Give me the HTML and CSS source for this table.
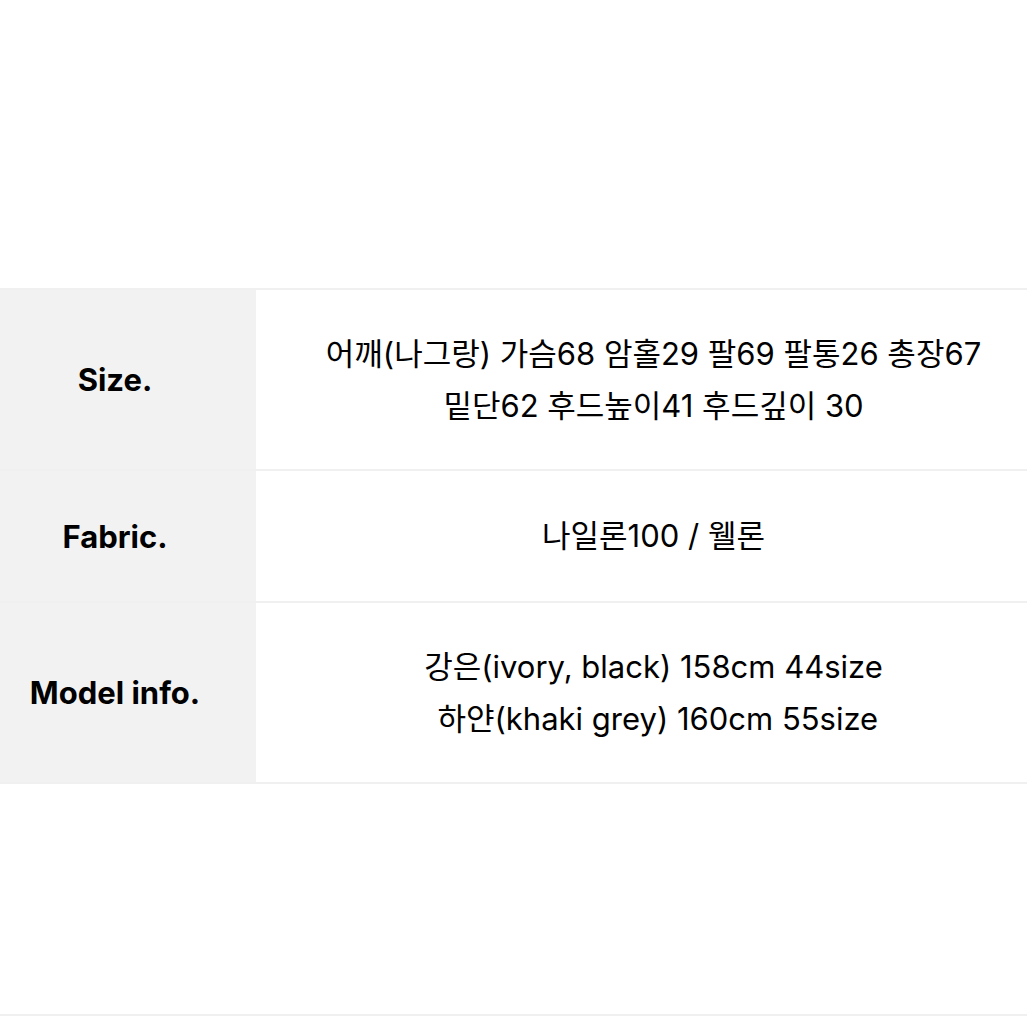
FILE: index.html
```html
<!DOCTYPE html>
<html lang="ko">
<head>
<meta charset="utf-8">
<link rel="stylesheet" href="styles.css">
</head>
<body>
<div class="page">
  <div class="table">
    <div class="row row-tall">
      <div class="label">Size.</div>
      <div class="value">어깨(나그랑) 가슴68 암홀29 팔69 팔통26 총장67<br>밑단62 후드높이41 후드깊이 30</div>
    </div>
    <div class="row row-short">
      <div class="label">Fabric.</div>
      <div class="value">나일론100 / 웰론</div>
    </div>
    <div class="row row-tall">
      <div class="label">Model info.</div>
      <div class="value">강은(ivory, black) 158cm 44size<br>&nbsp;하얀(khaki grey) 160cm 55size</div>
    </div>
  </div>
  <div class="bottom-line"></div>
</div>
</body>
</html>
```

FILE: styles.css
```css
html, body {
  margin: 0;
  padding: 0;
  background: #ffffff;
}
.page {
  width: 1027px;
  height: 1027px;
  display: flex;
  flex-direction: column;
  font-family: Inter, "Noto Sans CJK KR", sans-serif;
  color: #000000;
}
.table {
  margin-top: 288px;
  border-top: 2px solid #f0f0f0;
  display: flex;
  flex-direction: column;
}
.row {
  display: flex;
  border-bottom: 2px solid #f0f0f0;
}
.row-tall { height: 179px; }
.row-short { height: 130px; }
.label {
  width: 230px;
  padding-right: 26px;
  background: #f2f2f2;
  display: flex;
  align-items: center;
  justify-content: center;
  font-weight: 700;
  font-size: 31px;
}
.value {
  flex: 1;
  padding-left: 24px;
  display: flex;
  align-items: center;
  justify-content: center;
  text-align: center;
  font-size: 31px;
  line-height: 52px;
}
.bottom-line {
  margin-top: auto;
  margin-bottom: 11px;
  height: 2px;
  background: #f0f0f0;
}
```
